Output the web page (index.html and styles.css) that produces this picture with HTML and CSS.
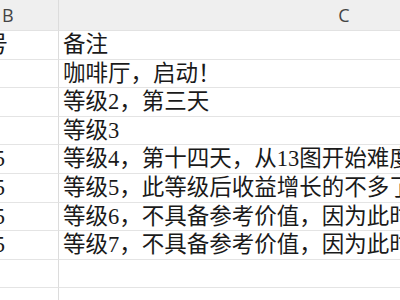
FILE: index.html
```html
<!DOCTYPE html>
<html lang="zh">
<head>
<meta charset="utf-8">
<link rel="stylesheet" href="styles.css">
</head>
<body>
<div class="sheet">
  <div class="hd hd-b">B</div><div class="hd hd-c">C</div>
  <div class="cell colb">编号</div><div class="cell colc">备注</div>
  <div class="cell colb"></div><div class="cell colc">咖啡厅，启动！</div>
  <div class="cell colb"></div><div class="cell colc">等级2，第三天</div>
  <div class="cell colb"></div><div class="cell colc">等级3</div>
  <div class="cell colb num">1.5</div><div class="cell colc">等级4，第十四天，从13图开始难度提升</div>
  <div class="cell colb num">1.5</div><div class="cell colc">等级5，此等级后收益增长的不多了</div>
  <div class="cell colb num">1.5</div><div class="cell colc">等级6，不具备参考价值，因为此时</div>
  <div class="cell colb num">1.5</div><div class="cell colc">等级7，不具备参考价值，因为此时</div>
  <div class="cell colb"></div><div class="cell colc"></div>
  <div class="cell colb"></div><div class="cell colc"></div>
</div>
</body>
</html>
```
FILE: styles.css
```css
html, body {
  margin: 0;
  padding: 0;
  background: #ffffff;
  overflow: hidden;
  width: 400px;
  height: 300px;
}
.sheet {
  display: grid;
  grid-template-columns: 104px 570px;
  grid-auto-rows: 28.6px;
  grid-template-rows: 31px;
  margin-left: -45px;
  width: 674px;
}
.hd {
  background: #efefef;
  font-family: "Open Sans", "Noto Sans", sans-serif;
  font-size: 18px;
  color: #444;
  text-align: center;
  line-height: 31px;
  border-bottom: 1px solid #e2e2e2;
  box-sizing: border-box;
}
.hd-b {
  border-right: 1px solid #dcdcdc;
  text-align: left;
  padding-left: 47px;
}
.cell {
  font-family: "Liberation Serif", "Noto Sans CJK SC", serif;
  font-size: 22.5px;
  color: #1a1a1a;
  white-space: nowrap;
  overflow: hidden;
  border-bottom: 1px solid #e4e4e4;
  box-sizing: border-box;
  line-height: 28px;
}
.colb {
  border-right: 1px solid #dcdcdc;
  text-align: right;
  padding-right: 50px;
}
.colb.num {
  padding-right: 53px;
}
.colc {
  padding-left: 4px;
  text-align: left;
}
```
